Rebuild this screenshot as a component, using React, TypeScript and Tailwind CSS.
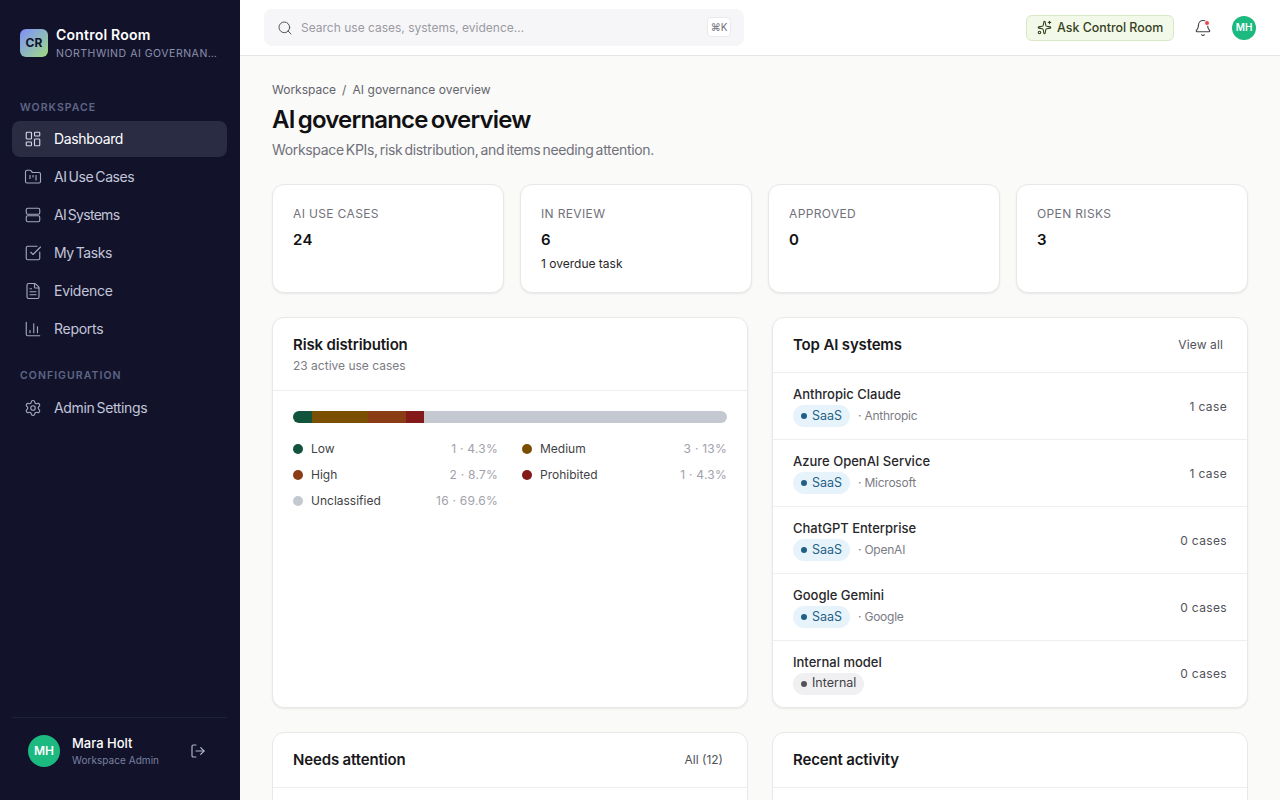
import React from 'react';
import { LayoutDashboard, FolderKanban, SquareCheckBig, FileText, ChartColumn, Settings, LogOut, Search, Bell, Sparkles } from 'lucide-react';

const ServerIcon = ({ size = 18, strokeWidth = 1.5, className = '' }: { size?: number; strokeWidth?: number; className?: string }) => (
  <svg width={size} height={size} viewBox="0 0 24 24" fill="none" stroke="currentColor" strokeWidth={strokeWidth} className={className}>
    <rect x="3" y="3" width="18" height="8" rx="2" />
    <rect x="3" y="13" width="18" height="8" rx="2" />
  </svg>
);

const workspaceNav = [
  { label: 'Dashboard', icon: LayoutDashboard, active: true, tracking: 'tracking-[-0.025em]' },
  { label: 'AI Use Cases', icon: FolderKanban, tracking: 'tracking-[-0.03em]' },
  { label: 'AI Systems', icon: ServerIcon, tracking: 'tracking-[-0.05em]' },
  { label: 'My Tasks', icon: SquareCheckBig, tracking: 'tracking-[-0.03em]' },
  { label: 'Evidence', icon: FileText, tracking: 'tracking-[-0.02em]' },
  { label: 'Reports', icon: ChartColumn, tracking: 'tracking-[-0.02em]' },
];

const kpis = [
  { label: 'AI USE CASES', value: '24' },
  { label: 'IN REVIEW', value: '6', note: '1 overdue task' },
  { label: 'APPROVED', value: '0' },
  { label: 'OPEN RISKS', value: '3' },
];

const riskBar = [
  { width: 'w-[4.3%]', color: 'bg-[#11533b]' },
  { width: 'w-[13%]', color: 'bg-[#7a4f02]' },
  { width: 'w-[8.7%]', color: 'bg-[#8a3c14]' },
  { width: 'w-[4.3%]', color: 'bg-[#851a1a]' },
  { width: 'flex-1', color: 'bg-[#c4c8d0]' },
];

const legend = [
  { label: 'Low', value: '1 · 4.3%', color: 'bg-[#11533b]' },
  { label: 'Medium', value: '3 · 13%', color: 'bg-[#7a4f02]' },
  { label: 'High', value: '2 · 8.7%', color: 'bg-[#8a3c14]' },
  { label: 'Prohibited', value: '1 · 4.3%', color: 'bg-[#851a1a]' },
  { label: 'Unclassified', value: '16 · 69.6%', color: 'bg-[#c4c8d0]' },
];

const systems = [
  { name: 'Anthropic Claude', vendor: 'Anthropic', cases: '1 case', kind: 'SaaS' },
  { name: 'Azure OpenAI Service', vendor: 'Microsoft', cases: '1 case', kind: 'SaaS' },
  { name: 'ChatGPT Enterprise', vendor: 'OpenAI', cases: '0 cases', kind: 'SaaS' },
  { name: 'Google Gemini', vendor: 'Google', cases: '0 cases', kind: 'SaaS' },
  { name: 'Internal model', vendor: '', cases: '0 cases', kind: 'Internal' },
];

const App: React.FC = () => {
  return (
    <div className="flex h-[800px] w-[1280px] overflow-hidden bg-[#fafaf9] font-['Inter',sans-serif]">
      <aside className="flex w-[240px] shrink-0 flex-col bg-[#12132b] pl-3 pr-[13px]">
        <div className="flex h-[86px] items-center gap-2 pl-2">
          <div className="flex h-7 w-7 shrink-0 items-center justify-center rounded-md bg-gradient-to-br from-[#818cf8] to-[#a3d977] text-[12px] font-bold text-[#12132b]">CR</div>
          <div className="min-w-0 flex-1 pr-2 pt-[2px]">
            <p className="text-[14px] font-semibold leading-[18px] tracking-[0.015em] text-white">Control Room</p>
            <p className="mt-[2px] truncate text-[10.5px] leading-[16px] tracking-[0.05em] text-[#8b90ab]">NORTHWIND AI GOVERNANCE</p>
          </div>
        </div>
        <p className="mb-[5px] mt-[14px] pl-2 text-[10.5px] font-semibold leading-[16px] tracking-[0.1em] text-[#5f6685]">WORKSPACE</p>
        <nav className="flex flex-col gap-[2px]">
          {workspaceNav.map(item => (
            <div key={item.label} className={`flex h-9 items-center gap-3 rounded-lg pl-3 text-[14px] [word-spacing:-1.5px] ${item.tracking} ${item.active ? 'bg-[#2a2c44] text-white' : 'text-[#c3c6d9]'}`}>
              <item.icon size={18} strokeWidth={1.5} className={item.active ? 'text-[#d5d7e5]' : 'text-[#a3a7c0]'} />
              <span className="pb-[2px]">{item.label}</span>
            </div>
          ))}
        </nav>
        <p className="mb-[6px] mt-[21px] pl-2 text-[10.5px] font-semibold leading-[16px] tracking-[0.1em] text-[#5f6685]">CONFIGURATION</p>
        <div className="flex h-9 items-center gap-3 rounded-lg pl-3 text-[14px] tracking-[-0.025em] text-[#c3c6d9] [word-spacing:-1.5px]">
          <Settings size={18} strokeWidth={1.5} className="text-[#a3a7c0]" />
          <span className="pb-[2px]">Admin Settings</span>
        </div>
        <div className="mt-auto flex h-[83px] items-start border-t border-[#1f2140] pl-4 pt-[17px]">
          <div className="flex h-8 w-8 items-center justify-center rounded-full bg-[#1cb981] text-[12px] font-semibold text-white">MH</div>
          <div className="ml-3 flex-1">
            <p className="text-[13px] font-medium leading-[17px] text-white">Mara Holt</p>
            <p className="text-[10px] leading-[16px] tracking-[0.005em] text-[#7a80a0]">Workspace Admin</p>
          </div>
          <LogOut size={16} strokeWidth={1.75} className="mr-[21px] mt-2 text-[#b3b6cb]" />
        </div>
      </aside>

      <div className="flex min-w-0 flex-1 flex-col">
        <header className="flex h-14 shrink-0 items-center border-b border-[#e5e5e5] bg-white pl-6 pr-6">
          <div className="flex h-[37px] w-[480px] items-center rounded-lg bg-[#f6f6f8] pl-[13px] pr-[13px]">
            <Search size={16} strokeWidth={1.5} className="text-[#52525b]" />
            <span className="ml-2 flex-1 pt-[1px] text-[12px] text-[#9a9aa2]">Search use cases, systems, evidence…</span>
            <span className="-mt-[1px] flex h-5 w-6 items-center justify-center rounded border border-[#eaeaec] bg-white text-[10px] text-[#71717a]">⌘K</span>
          </div>
          <div className="ml-auto flex h-[26px] w-[148px] items-center gap-[5px] rounded-md border border-[#dbe8c4] bg-[#f3f9e8] pl-[10px] text-[12.4px] font-medium text-[#33401f]">
            <Sparkles size={15} strokeWidth={1.75} />
            <span className="pt-[1px]">Ask Control Room</span>
          </div>
          <div className="relative ml-5">
            <Bell size={18} strokeWidth={1.5} className="text-[#3f3f46]" />
            <span className="absolute left-[10px] top-[1px] h-[6px] w-[6px] rounded-full border border-white bg-[#e5484d]" />
          </div>
          <div className="ml-5 flex h-6 w-6 items-center justify-center rounded-full bg-[#1cb981] text-[10px] font-semibold text-white">MH</div>
        </header>

        <main className="min-h-0 flex-1 overflow-hidden px-8 pt-6">
          <div className="flex items-center gap-[6px] text-[12px] leading-[20px] text-[#63636b]">
            <span>Workspace</span>
            <span>/</span>
            <span className="tracking-[0.005em]">AI governance overview</span>
          </div>
          <h1 className="mt-[4px] text-[24px] font-semibold leading-[32px] tracking-[-0.034em] text-[#111113] [word-spacing:-2px]">AI governance overview</h1>
          <p className="mt-[3px] text-[14px] leading-[22px] tracking-[-0.024em] text-[#71717a] [word-spacing:-1.5px]">Workspace KPIs, risk distribution, and items needing attention.</p>

          <div className="mt-[23px] grid grid-cols-4 gap-4">
            {kpis.map(kpi => (
              <div key={kpi.label} className="h-[109px] rounded-xl border border-[#e8e8e8] bg-white px-5 pt-[21px] shadow-[0_1px_2px_rgba(0,0,0,0.08)]">
                <p className="text-[12px] leading-[16px] tracking-[0.03em] text-[#71717a]">{kpi.label}</p>
                <p className="mt-[6px] text-[15px] font-semibold leading-[24px] tracking-[0.02em] text-[#111113]">{kpi.value}</p>
                {kpi.note && <p className="mt-[4px] text-[12px] leading-[16px] text-[#27272a]">{kpi.note}</p>}
              </div>
            ))}
          </div>

          <div className="mt-6 grid grid-cols-2 gap-6">
            <section className="h-[391px] rounded-xl border border-[#e8e8e8] bg-white shadow-[0_1px_2px_rgba(0,0,0,0.08)]">
              <div className="h-[73px] border-b border-[#eeeeee] px-5 pt-4">
                <h2 className="text-[15px] font-semibold leading-[22px] tracking-[-0.01em] text-[#18181b]">Risk distribution</h2>
                <p className="mt-[1px] text-[12px] leading-[18px] text-[#7c7c84]">23 active use cases</p>
              </div>
              <div className="px-5 pt-5">
                <div className="flex h-3 overflow-hidden rounded-full">
                  {riskBar.map((seg, i) => <div key={i} className={`${seg.width} ${seg.color}`} />)}
                </div>
                <div className="mt-[13px] grid grid-cols-2 gap-x-6">
                  {legend.map(item => (
                    <div key={item.label} className="flex h-[26px] items-center text-[12px]">
                      <span className={`h-[10px] w-[10px] rounded-full ${item.color}`} />
                      <span className="ml-2 text-[#3f3f46]">{item.label}</span>
                      <span className="ml-auto tracking-[0.02em] text-[#a1a1aa]">{item.value}</span>
                    </div>
                  ))}
                </div>
              </div>
            </section>

            <section className="h-[391px] overflow-hidden rounded-xl border border-[#e8e8e8] bg-white shadow-[0_1px_2px_rgba(0,0,0,0.08)]">
              <div className="flex h-[55px] items-center justify-between border-b border-[#eeeeee] pl-5 pr-6">
                <h2 className="text-[15px] font-semibold tracking-[-0.01em] text-[#18181b]">Top AI systems</h2>
                <span className="text-[12px] tracking-[0.01em] text-[#52525b]">View all</span>
              </div>
              {systems.map((sys, i) => (
                <div key={sys.name} className={`flex items-center justify-between px-5 ${i < systems.length - 1 ? 'h-[67px] border-b border-[#eeeeee]' : 'h-[65px]'}`}>
                  <div>
                    <p className="text-[13px] font-medium leading-[18px] text-[#27272a]">{sys.name}</p>
                    <div className="mt-[2px] flex items-center">
                      <span className={`flex h-[22px] items-center gap-[5px] rounded-full px-2 text-[12.5px] ${sys.kind === 'SaaS' ? 'bg-[#e6f3fb] text-[#1f5f85]' : 'bg-[#f0f0f2] text-[#3f3f46]'}`}>
                        <span className={`h-[6px] w-[6px] rounded-full ${sys.kind === 'SaaS' ? 'bg-[#1f5f85]' : 'bg-[#52525b]'}`} />
                        {sys.kind}
                      </span>
                      {sys.vendor && <span className="ml-2 text-[12px] tracking-[-0.02em] text-[#7c7c84]">· {sys.vendor}</span>}
                    </div>
                  </div>
                  <span className="pt-[1px] text-[12px] tracking-[0.03em] text-[#52525b]">{sys.cases}</span>
                </div>
              ))}
            </section>
          </div>

          <div className="mt-6 grid grid-cols-2 gap-6">
            <section className="h-[200px] rounded-xl border border-[#e8e8e8] bg-white">
              <div className="flex h-[55px] items-center justify-between border-b border-[#eeeeee] pl-5 pr-6">
                <h2 className="text-[15px] font-semibold tracking-[-0.01em] text-[#18181b]">Needs attention</h2>
                <span className="text-[12px] text-[#52525b]">All (12)</span>
              </div>
            </section>
            <section className="h-[200px] rounded-xl border border-[#e8e8e8] bg-white">
              <div className="flex h-[55px] items-center border-b border-[#eeeeee] pl-5 pr-6">
                <h2 className="text-[15px] font-semibold tracking-[-0.01em] text-[#18181b]">Recent activity</h2>
              </div>
            </section>
          </div>
        </main>
      </div>
    </div>
  );
};

export default App;
